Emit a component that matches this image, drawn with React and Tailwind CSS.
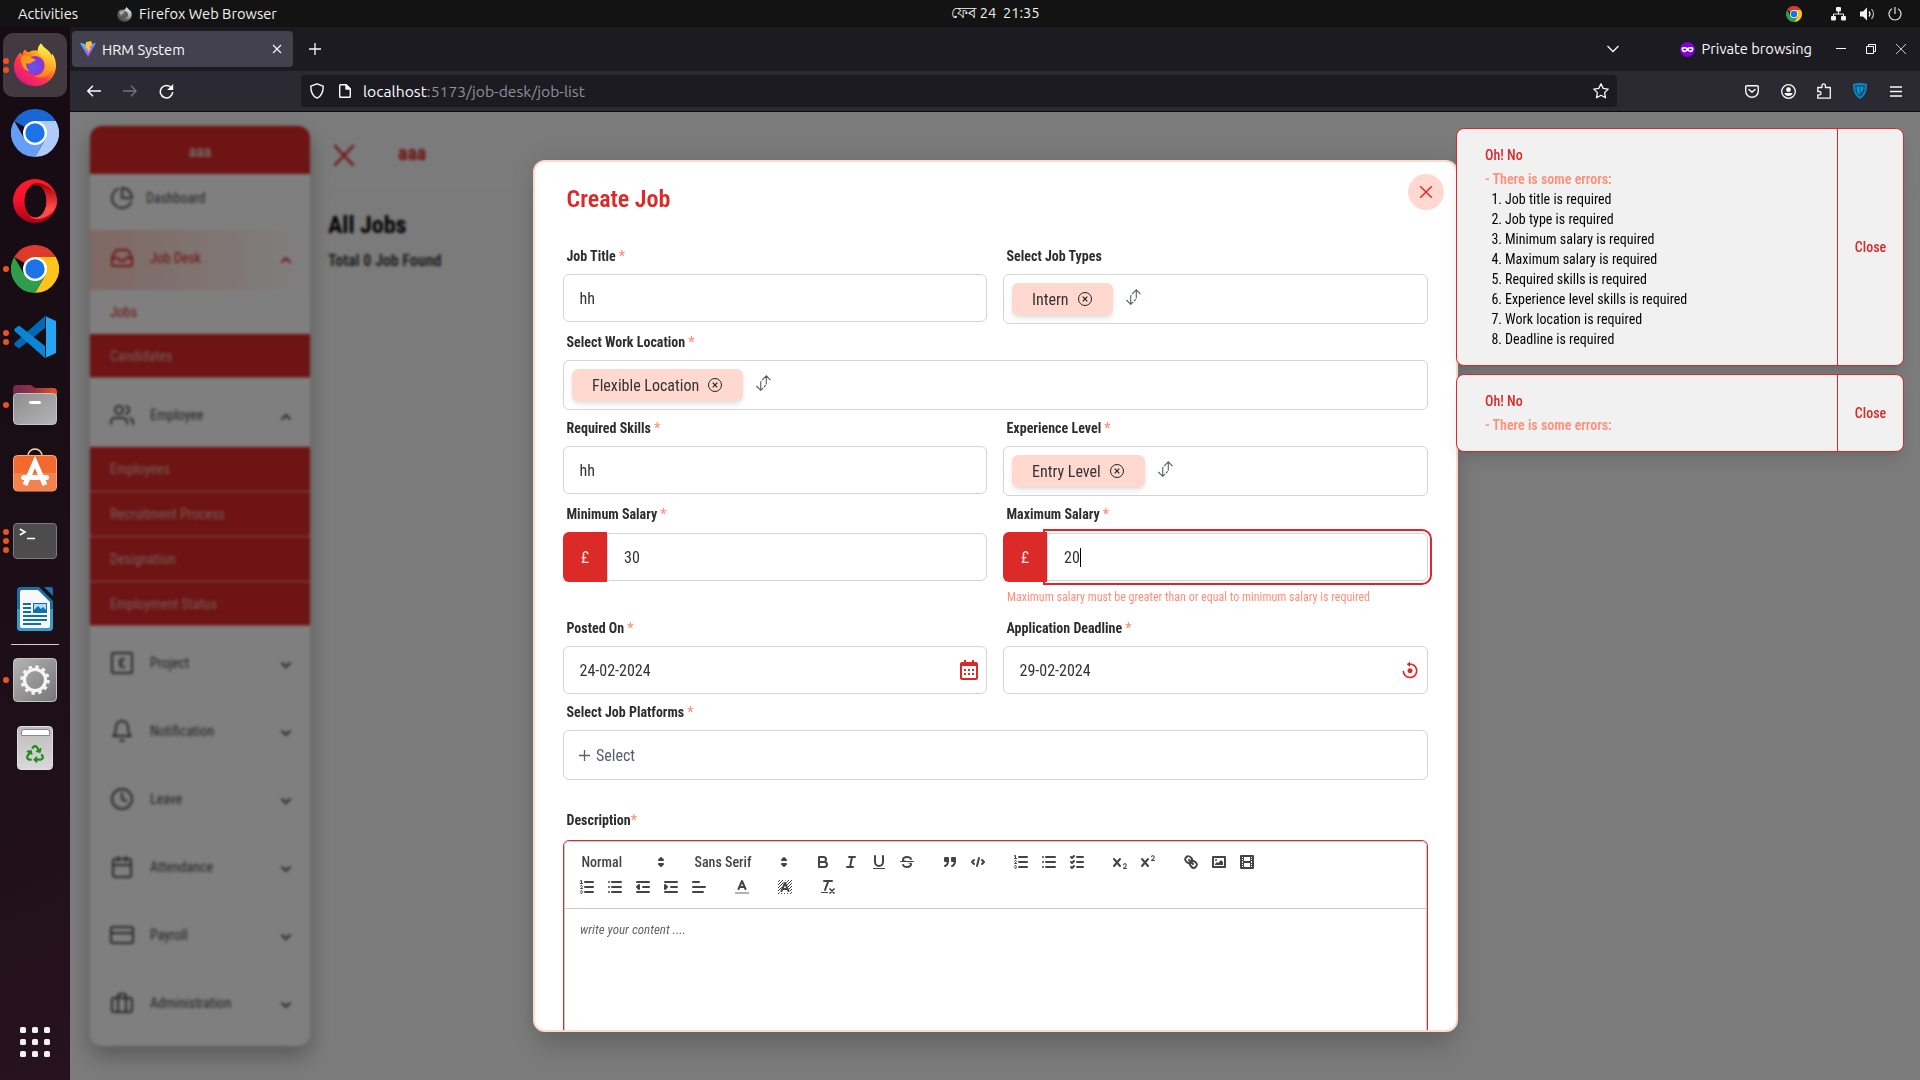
import React from 'react';
import { FiPieChart, FiInbox, FiUsers, FiBell, FiClock, FiCalendar, FiCreditCard, FiBriefcase, FiChevronDown, FiChevronUp } from 'react-icons/fi';
import { BiCalendar, BiReset } from 'react-icons/bi';
import { FaRecycle } from 'react-icons/fa';

/* ---------- dock icons ---------- */

function FirefoxIcon({ size = 44, gray = false }) {
  const id = gray ? 'g' : 'c';
  return (
    <svg width={size} height={size} viewBox="0 0 44 44" className={gray ? 'grayscale' : ''}>
      <defs>
        <linearGradient id={`ffb${id}`} x1="0.85" y1="0.1" x2="0.2" y2="0.95">
          <stop offset="0.05" stopColor="#fff44f" />
          <stop offset="0.35" stopColor="#ff980e" />
          <stop offset="0.62" stopColor="#ff3647" />
          <stop offset="1" stopColor="#e31587" />
        </linearGradient>
        <linearGradient id={`ffy${id}`} x1="0.6" y1="0" x2="0.5" y2="1">
          <stop offset="0" stopColor="#fff44f" />
          <stop offset="0.5" stopColor="#ffbd2e" />
          <stop offset="1" stopColor="#ff7a1f" />
        </linearGradient>
        <radialGradient id={`ffp${id}`} cx="0.4" cy="0.55" r="0.6">
          <stop offset="0" stopColor="#5b5ce8" />
          <stop offset="0.6" stopColor="#7a3fe0" />
          <stop offset="1" stopColor="#9a2fd0" />
        </radialGradient>
      </defs>
      <path d="M28 .5c-2.500 2.200-3.500 5.300-3.500 7.500-3-.8-6.500-.3-9 1.200-1.500-.3-2.500-1-3.500-2.700-1.500 1.500-2.300 3-2.300 5-.9-.2-1.800-1-2.200-2C4.500 12 1 17 1 23.500 1 34.500 10.500 43 22 43s21-8.500 21-20.500c0-4.500-1.500-9-4-12l-.5 2.500C37 7 31 6 28 .5Z" fill={`url(#ffb${id})`} />
      <path d="M28 .5c-3.500 3.500-4 8.500-1.500 11.500 4 2.500 6.500 6 6 11-.5 5.500-5 10-11 10 6.500 4 15.500 0 18.500-7 2.500-6 1-12-1.500-13C37 7 31 6 28 .5Z" fill={`url(#ffy${id})`} />
      <circle cx="22" cy="22.500" r="9.500" fill={`url(#ffp${id})`} />
      <path d="M7.500 14c4-2 8.500-2 11 .8 1 .9 4 1 4 1.700 0 1.500-3.500 2.500-4.500 3.500-1 1-3.500.5-5 .5 0 3 1 6 4 8-5-.5-9-5-9.500-14.500Z" fill="#ff9a1f" />
    </svg>
  );
}

function ChromeIcon({ size = 48, top = '#dd3a2b', left = '#2f9d4b', right = '#fcc41c' }) {
  return (
    <svg width={size} height={size} viewBox="0 0 48 48">
      <path d="M24 24 3.200 12A24 24 0 0 1 44.800 12Z" fill={top} />
      <path d="M24 12H44.800A24 24 0 0 1 24 48L34.400 30Z" fill={right} />
      <path d="M3.200 12A24 24 0 0 0 24 48L34.400 30 13.600 30Z" fill={left} />
      <path d="M24 12h20.800L34 30Z" fill={right} />
      <circle cx="24" cy="24" r="12" fill="#fff" />
      <circle cx="24" cy="24" r="9.700" fill="#1a73e8" />
    </svg>
  );
}

function OperaIcon() {
  return (
    <svg width="44" height="44" viewBox="0 0 44 44">
      <defs>
        <linearGradient id="op1" x1="0" y1="0" x2="0" y2="1">
          <stop offset="0" stopColor="#ff1b2d" />
          <stop offset="0.5" stopColor="#f0142a" />
          <stop offset="1" stopColor="#a70014" />
        </linearGradient>
        <linearGradient id="op2" x1="0" y1="0" x2="0" y2="1">
          <stop offset="0" stopColor="#9c0000" />
          <stop offset="0.7" stopColor="#ff4b4b" />
        </linearGradient>
      </defs>
      <path fillRule="evenodd" d="M22 0a22 22 0 1 0 0 44 22 22 0 0 0 0-44Zm.5 5.500c6 0 11 7.400 11 16.500s-5 16.500-11 16.500-11-7.400-11-16.500 5-16.500 11-16.500Z" fill="url(#op1)" />
      <path d="M15 8.500C18 5 22 3.500 26 4.200 35 6 44 12 44 22s-9 16.500-18 18c-4 .6-8-1-11-4.500 2.200 2 5 3.200 8 3 6-.5 10.500-7.500 10.500-16.500S29 6 22.500 5.500c-3 0-5.500 1-7.500 3Z" fill="url(#op2)" />
    </svg>
  );
}

function CodeIcon() {
  return (
    <svg width="42" height="42" viewBox="0 0 42 42">
      <path d="M31 0v12L5 32.500 1 29.500q-1.500-1.500 0-3Z" fill="#0069b4" />
      <path d="M31 42V30L5 9.500 1 12.500q-1.500 1.500 0 3Z" fill="#0a86d4" />
      <path d="M31 0 42 5v32l-11 5q1-1 1-3V3q0-2-1-3Z" fill="#26a5f2" />
    </svg>
  );
}

function FilesIcon() {
  return (
    <svg width="46" height="42" viewBox="0 0 46 42">
      <defs>
        <linearGradient id="fl1"><stop offset="0.1" stopColor="#77294f" /><stop offset="0.5" stopColor="#97343f" /><stop offset="1" stopColor="#e95420" /></linearGradient>
        <linearGradient id="fl2" x1="0" y1="0" x2="1" y2="1"><stop offset="0" stopColor="#8e8e8e" /><stop offset="1" stopColor="#b4b4b4" /></linearGradient>
      </defs>
      <path d="M1 20V5q0-4 4-4h13q2 0 3 1.500T24 4h17q4 0 4 4v12Z" fill="url(#fl1)" />
      <rect x="1.500" y="9.500" width="43" height="31" rx="4" fill="url(#fl2)" stroke="#c4c4c4" />
      <rect x="17" y="17" width="12" height="3" rx="1.500" fill="#fff" />
    </svg>
  );
}

function SoftwareIcon() {
  return (
    <svg width="46" height="44" viewBox="0 0 46 44" className="mb-[7px]">
      <path d="M16 10V8a7 7 0 0 1 14 0v2" fill="none" stroke="#f7dcb0" strokeWidth="1.500" />
      <rect x="1.500" y="7.500" width="43" height="35.500" rx="4" fill="#f26a2e" stroke="#f8a883" />
      <path d="M2 25h42v14q0 3.500-3.500 3.500H5.500Q2 42.500 2 39Z" fill="#f4824c" />
      <path d="M13 37 23 14 33 37" fill="none" stroke="#fff" strokeWidth="5" />
      <rect x="9" y="27" width="28" height="5" rx="2.500" fill="#fff" />
    </svg>
  );
}

function TerminalIcon() {
  return (
    <div className="flex h-9 w-[44px] items-start rounded-[4px] border border-[#7c7c7c] bg-[#4c4c4c] px-[5px] text-white">
      <svg width="18" height="18" viewBox="0 0 18 18" fill="none" stroke="#fff" strokeWidth="1.600">
        <path d="M.8 5 6 8 .8 11M8 14.500h8" />
      </svg>
    </div>
  );
}

function WriterIcon() {
  return (
    <svg width="36" height="44" viewBox="0 0 36 44">
      <path d="M4 0h18l14 14v26q0 4-4 4H4q-4 0-4-4V4q0-4 4-4Z" fill="#1d6ea6" />
      <path d="M0 22h36v18q0 4-4 4H4q-4 0-4-4Z" fill="#3b9bcd" />
      <path d="M27 0h7q2 0 2 2v7Z" fill="#1d6ea6" />
      <path d="M5 3h16l12 12v24q0 2-2 2H5q-2 0-2-2V5q0-2 2-2Z" fill="#f8f8f8" />
      <path d="M6 17h8M6 21h8M6 25h8M6 29h24M6 33h24M6 37h18" stroke="#0f6fb2" strokeWidth="2" />
      <rect x="16.500" y="16.500" width="13" height="9" fill="#b5dbf3" stroke="#0f6fb2" />
      <path d="M17 25v-2l4-4 3 3 2-2 3 3v2Z" fill="#0f6fb2" />
    </svg>
  );
}

function SettingsIcon() {
  return (
    <svg width="44" height="44" viewBox="0 0 45 45">
      <defs><linearGradient id="st" x1="0" y1="0" x2="1" y2="1"><stop offset="0" stopColor="#b5b5b5" /><stop offset="1" stopColor="#757575" /></linearGradient></defs>
      <rect x=".5" y=".5" width="44" height="44" rx="4" fill="url(#st)" stroke="#c8c8c8" />
      <circle cx="22.500" cy="22.500" r="13.500" fill="none" stroke="#f4f4f4" strokeWidth="3" strokeDasharray="3.500 3.569" />
      <circle cx="22.500" cy="22.500" r="10.800" fill="none" stroke="#f4f4f4" strokeWidth="3.400" />
    </svg>
  );
}

function TrashIcon() {
  return (
    <div className="flex h-[44px] w-[36px] flex-col items-center rounded-[4px] border border-[#e0e0e0] bg-gradient-to-b from-[#bdbdbd] to-[#d8d8d8] pt-[2px]">
      <div className="h-[7px] w-[29px] rounded-t-[3px] border border-[#8a8a8a] bg-white" />
      <FaRecycle size={18} className="mt-[9px] text-[#258a1c]" />
    </div>
  );
}

function DockItem({ dots = 0, active = false, children }) {
  return (
    <div className="flex h-[68px] w-[70px] items-center">
      <div className="flex w-[3px] flex-col items-start gap-[3px]">
        {Array.from({ length: dots }, (_, i) => (
          <span key={i} className="z-10 ml-[3px] size-[6px] rounded-full bg-[#e95420]" />
        ))}
      </div>
      <div className={`flex size-16 items-center justify-center rounded-[10px] ${active ? 'bg-[#433940]' : ''}`}>{children}</div>
    </div>
  );
}

function Dock() {
  return (
    <aside className="flex w-[70px] flex-none flex-col bg-[linear-gradient(160deg,#160b12_0%,#1c0f17_60%,#27121f_100%)] pt-1">
      <DockItem dots={2} active><FirefoxIcon /></DockItem>
      <DockItem><ChromeIcon top="#1967d2" left="#669df6" right="#aecbfa" /></DockItem>
      <DockItem><OperaIcon /></DockItem>
      <DockItem dots={1}><ChromeIcon /></DockItem>
      <DockItem dots={2}><CodeIcon /></DockItem>
      <DockItem dots={1}><FilesIcon /></DockItem>
      <DockItem><SoftwareIcon /></DockItem>
      <DockItem dots={3}><TerminalIcon /></DockItem>
      <DockItem><WriterIcon /></DockItem>
      <div className="mx-[11px] my-[1px] h-px bg-[#d0cdcf]" />
      <DockItem dots={1}><SettingsIcon /></DockItem>
      <DockItem><TrashIcon /></DockItem>
      <div className="mx-auto mt-auto mb-[23px] grid grid-cols-3 gap-[6px]">
        {Array.from({ length: 9 }, (_, i) => <span key={i} className="size-[6px] rounded-[1.500px] bg-[#f2f2f2]" />)}
      </div>
    </aside>
  );
}

/* ---------- desktop top bar ---------- */

function TopBar() {
  return (
    <header className="grid h-[27px] flex-none grid-cols-3 items-center bg-[#131313] text-[14.667px] leading-none text-[#f2f2f2]">
      <div className="flex items-center pt-px pl-[18px]">
        <span>Activities</span>
        <span className="mr-[7px] ml-[39px]"><FirefoxIcon size={15} gray /></span>
        <span>Firefox Web Browser</span>
      </div>
      <div className="pl-[71px] text-center whitespace-pre">ফেব 24  21:35</div>
      <div className="flex items-center justify-end pr-[18px]">
        <ChromeIcon size={16} />
        <svg className="ml-[29px]" width="15" height="14" viewBox="0 0 15 14" fill="#f2f2f2">
          <rect x="5" y="0" width="5" height="4.500" rx="1" /><rect x="0" y="9" width="5" height="4.500" rx="1" /><rect x="10" y="9" width="5" height="4.500" rx="1" />
          <path d="M2.500 9V7h10v2M7.500 4v3" fill="none" stroke="#f2f2f2" />
        </svg>
        <svg className="ml-[14px]" width="15" height="14" viewBox="0 0 15 14" fill="#f2f2f2">
          <path d="M0 4.500h3L7 .5v13l-4-4H0Z" /><path d="M9 4.500q2 2.500 0 5" fill="none" stroke="#f2f2f2" strokeWidth="1.300" /><path d="M11.500 2q4 5 0 10" fill="none" stroke="#bbb" strokeWidth="1.200" />
        </svg>
        <svg className="ml-[13px]" width="14" height="14" viewBox="0 0 14 14" fill="none" stroke="#e6e6e6" strokeWidth="1.200">
          <path d="M7 0v7M4 1.800a6 6 0 1 0 6 0" />
        </svg>
      </div>
    </header>
  );
}

/* ---------- browser chrome ---------- */

function TabStrip() {
  return (
    <div className="flex h-11 items-center bg-[#1c1b22] pl-[2px] text-[14.667px] text-[#fbfbfe]">
      <div className="flex h-9 w-[221px] items-center rounded-[4px] bg-[#42414d] pl-2 pr-[11px]">
        <svg width="16" height="16" viewBox="0 0 16 16">
          <defs><linearGradient id="vt" x1="0" y1="0" x2="0.7" y2="1"><stop offset="0" stopColor="#41d1ff" /><stop offset="1" stopColor="#bd34fe" /></linearGradient></defs>
          <path d="M0 2 8 16 16 2 8 3.400Z" fill="url(#vt)" />
          <path d="M11.500 0 6 1.100 5.600 7.400l1.700-.3-.5 2.400 1.500-.4-.7 3.500L11 7l-1.500.3.6-2 1.800-.4Z" fill="#ffc62a" />
        </svg>
        <span className="mt-px ml-[6px]">HRM System</span>
        <svg className="ml-auto" width="10" height="10" viewBox="0 0 10 10" stroke="#fbfbfe" strokeWidth="1.100"><path d="m1 1 8 8M9 1 1 9" /></svg>
      </div>
      <svg className="ml-[16px]" width="12" height="12" viewBox="0 0 12 12" stroke="#fbfbfe" strokeWidth="1.300"><path d="M6 0v12M0 6h12" /></svg>
      <svg className="ml-auto" width="12" height="8" viewBox="0 0 12 8" fill="none" stroke="#fbfbfe" strokeWidth="1.300"><path d="m.5 1 5.500 5.500L11.500 1" /></svg>
      <svg className="ml-[61px]" width="15" height="15" viewBox="0 0 15 15">
        <circle cx="7.500" cy="7.500" r="7.500" fill="#8000d7" />
        <path d="M7.500 6C6 4.800 2 4.300 1.500 6.500 1.300 9 3 10.500 4.500 10.300c1.500-.2 2-1.300 3-1.300s1.500 1.100 3 1.300c1.500.2 3.200-1.300 3-3.800C13 4.300 9 4.800 7.500 6Z" fill="#fff" />
        <ellipse cx="4.700" cy="7.500" rx="1.600" ry="1" fill="#8000d7" /><ellipse cx="10.300" cy="7.500" rx="1.600" ry="1" fill="#8000d7" />
      </svg>
      <span className="ml-[7px]">Private browsing</span>
      <svg className="ml-[24px]" width="10" height="10" viewBox="0 0 10 10"><path d="M0 4.500h10" stroke="#fff" /></svg>
      <svg className="ml-[20px]" width="10" height="10" viewBox="0 0 10 10" fill="none" stroke="#fff"><path d="M.5 2.500h7v7h-7ZM2.500 2V.5h7v7H8" /></svg>
      <svg className="ml-[20px] mr-[14px]" width="10" height="10" viewBox="0 0 10 10" stroke="#ddd" strokeWidth="0.900"><path d="m0 0 10 10M10 0 0 10" /></svg>
    </div>
  );
}

function NavBar() {
  return (
    <div className="flex h-[41px] items-center border-b border-[#0c0c0d] bg-[#2b2a33] text-[15.7px] text-[#fbfbfe]">
      <svg className="ml-[17px]" width="14" height="12" viewBox="0 0 14 12" fill="none" stroke="#fbfbfe" strokeWidth="1.400"><path d="M14 6H1M6 .8.8 6 6 11.200" /></svg>
      <svg className="ml-[22px]" width="14" height="12" viewBox="0 0 14 12" fill="none" stroke="#77767e" strokeWidth="1.300"><path d="M0 6h13M8 .8 13.200 6 8 11.200" /></svg>
      <svg className="ml-[22px]" width="15" height="15" viewBox="0 0 15 15" fill="none" stroke="#fbfbfe" strokeWidth="1.500"><path d="M12.500 4A6.200 6.200 0 1 0 13.700 8" /><path d="M14.200 0v6h-6Z" fill="#fbfbfe" stroke="none" /></svg>
      <div className="ml-[127px] flex h-8 w-[1316px] items-center rounded-[4px] bg-[#1c1b22]">
        <svg className="ml-[9px]" width="14" height="16" viewBox="0 0 14 16" fill="none" stroke="#fbfbfe" strokeWidth="1.400"><path d="M7 .8 13.200 3.200c0 6-1.700 10-6.200 12C2.500 13.200.8 9.200.8 3.200Z" strokeLinejoin="round" /></svg>
        <svg className="ml-[15px]" width="12" height="14" viewBox="0 0 12 14" fill="none" stroke="#fbfbfe" strokeWidth="1.400" strokeLinejoin="round"><path d="M1.500.7H7L11.300 5v7.500q0 .8-.8.8h-9q-.8 0-.8-.8v-11q0-.8.8-.8Z" /><path d="M7 .7V5h4.300Z" fill="#fbfbfe" /></svg>
        <span className="mt-[2px] ml-[12px]">localhost<span className="text-[#8f8f9a]">:5173/job-desk/job-list</span></span>
        <svg className="ml-auto mr-[8px]" width="16" height="16" viewBox="0 0 16 16" fill="none" stroke="#fbfbfe" strokeWidth="1.300" strokeLinejoin="round"><path d="m8 .8 2.200 4.600 5 .7-3.600 3.500.9 5.200L8 12.300l-4.500 2.500.9-5.200L.8 6.100l5-.7Z" /></svg>
      </div>
      <svg className="ml-[128px]" width="14" height="13" viewBox="0 0 14 13" fill="none" stroke="#fbfbfe" strokeWidth="1.400" strokeLinejoin="round"><path d="M2 .7h10q1.300 0 1.300 1.300v4A6.300 6.300 0 0 1 .7 6V2Q.7.700 2 .7Z" /><path d="m4 4.500 3 2.800 3-2.800" strokeLinecap="round" /></svg>
      <svg className="ml-[22px]" width="15" height="15" viewBox="0 0 15 15"><circle cx="7.500" cy="7.500" r="6.800" fill="none" stroke="#fbfbfe" strokeWidth="1.300" /><circle cx="7.500" cy="5.700" r="2.400" fill="#fbfbfe" /><path d="M3.300 9h8.400q-1 3-4.200 3T3.300 9Z" fill="#fbfbfe" /></svg>
      <svg className="ml-[21px]" width="14" height="16" viewBox="0 0 14 16" fill="none" stroke="#fbfbfe" strokeWidth="1.300" strokeLinejoin="round"><path d="M5 4.500V2.800q0-2 1.700-2t1.700 2v1.700h4.900v10.700H.8v-3.400h1.500q1.800 0 1.800-1.600T2.300 8.500H.8v-4Z" /></svg>
      <svg className="ml-[22px]" width="14" height="16" viewBox="0 0 14 16"><path d="M0 1q7-1.800 14 0 .3 11-7 15Q-.3 12 0 1Z" fill="#0d86c6" /><path d="M2 2.500q5-1.200 10 0 .2 8-5 11.500Q1.800 10.500 2 2.500Z" fill="#12506f" /><path d="M3.600 3.800Q5 3.500 6.500 3.500v8.700Q3.500 9 3.600 3.800Zm3.900-.3q1.500 0 2.900.3 0 3.500-2.900 7Z" fill="#0d9be0" /></svg>
      <svg className="ml-[23px]" width="12" height="11" viewBox="0 0 12 11" stroke="#fbfbfe" strokeWidth="1.300"><path d="M0 1h12M0 5.500h12M0 10h12" /></svg>
    </div>
  );
}

/* ---------- page behind the dialog ---------- */

function ProjectIcon({ size }) {
  return (
    <svg width={size} height={size} viewBox="0 0 24 24" fill="none" stroke="currentColor" strokeWidth="2">
      <rect x="2" y="2" width="20" height="20" rx="1.500" /><path d="M15 8h-2.500a2.500 2.500 0 0 0-2.500 2.500v3a2.500 2.500 0 0 0 2.500 2.500H15M9 12h4" />
    </svg>
  );
}

function NavRow({ icon: Icon, label, chevron = 'down', className = 'h-[68px]' }) {
  return (
    <div className={`flex items-center pl-5 pr-4 ${className}`}>
      <Icon size={24} />
      <span className={chevron ? 'ml-4' : 'ml-3'}>{label}</span>
      {chevron === 'down' && <FiChevronDown size={16} strokeWidth={3} className="mt-1 ml-auto" />}
      {chevron === 'up' && <FiChevronUp size={16} strokeWidth={3} className="mt-1 ml-auto" />}
    </div>
  );
}

function SubRow({ children, className = 'h-[45px]' }) {
  return <div className={`flex items-center border-b border-[#f3a9a0] bg-[#dc2828] pl-5 text-[#e9b5b0] ${className}`}>{children}</div>;
}

function Page() {
  return (
    <div className="flex h-full bg-[#f7f7f7] pl-5 pt-[14px] text-base">
      <nav className="h-[920px] w-[220px] overflow-hidden rounded-xl bg-white text-sm text-[#4f4f4f] shadow-[0_10px_22px_rgba(0,0,0,0.28)]">
        <div className="flex h-12 items-center justify-center bg-[#dc2828] pt-1 text-base font-bold text-[#eec4c0]">aaa</div>
        <NavRow icon={FiPieChart} label="Dashboard" chevron="" className="h-12" />
        <NavRow icon={FiInbox} label="Job Desk" chevron="up" className="mt-2 h-[60px] bg-gradient-to-r from-[#ffd0c6] to-white pb-1 text-[#dc2828]" />
        <div className="flex h-11 items-center pl-5 text-[#dc2828]">Jobs</div>
        <SubRow className="h-[44px]">Candidates</SubRow>
        <NavRow icon={FiUsers} label="Employee" chevron="up" className="h-[69px] pt-[5px]" />
        <SubRow>Employees</SubRow>
        <SubRow>Recruitment Process</SubRow>
        <SubRow>Designation</SubRow>
        <SubRow className="h-[44px] pt-px">Employment Status</SubRow>
        <NavRow icon={ProjectIcon} label="Project" className="mt-[3px] h-[68px]" />
        <NavRow icon={FiBell} label="Notification" />
        <NavRow icon={FiClock} label="Leave" />
        <NavRow icon={FiCalendar} label="Attendance" />
        <NavRow icon={FiCreditCard} label="Payroll" />
        <NavRow icon={FiBriefcase} label="Administration" />
      </nav>
      <main className="flex-1 pl-[14px]">
        <div className="flex h-[66px] items-center border-b border-[#efefef] pl-[10px] pb-2 text-[#dc2828]">
          <svg width="20" height="22" viewBox="0 0 20 22" stroke="#dc2828" strokeWidth="2.500"><path d="M0 1 20 22M20 1 0 22" /></svg>
          <span className="ml-[44px] pb-1 text-xl font-bold">aaa</span>
        </div>
        <h1 className="mt-[17px] pl-1 text-2xl font-bold text-black">All Jobs</h1>
        <p className="mt-2 pl-1 text-base font-semibold text-[#333]">Total 0 Job Found</p>
      </main>
    </div>
  );
}

/* ---------- form ---------- */

function Field({ label, required = true, tight = false, children, className = '' }) {
  return (
    <div className={className}>
      <div className="flex h-9 items-center pl-[3.5px] text-sm font-bold text-[#2d2d2d]">
        {label}
        {required && <span className={`font-medium text-[#ff8f78] ${tight ? '' : 'ml-[3px]'}`}>*</span>}
      </div>
      {children}
    </div>
  );
}

function TextBox({ children, icon }) {
  return (
    <div className="flex h-12 items-center justify-between rounded-[6px] border border-[#d4d4d4] pl-[15.5px] pr-[5px] text-base text-[#333]">
      <span className="pt-px">{children}</span>
      {icon}
    </div>
  );
}

function ChipBox({ children }) {
  return (
    <div className="flex h-[50px] items-center rounded-[6px] border border-[#d4d4d4] pl-2 text-base text-[#333]">
      <div className="flex h-8 items-center rounded-[6px] bg-[#ffd9d0] pl-5 pr-[21px] shadow-md">
        <span className="pt-[2px]">{children}</span>
        <svg className="ml-[9px]" width="14" height="14" viewBox="0 0 14 14" fill="none" stroke="#222"><circle cx="7" cy="7" r="6.500" /><path d="m4.700 4.700 4.600 4.600M9.300 4.700 4.700 9.300" strokeWidth="1.200" /></svg>
      </div>
      <svg className="mb-1 ml-[13px]" width="15" height="16" viewBox="0 0 15 16" fill="none" stroke="#555f6b" strokeWidth="1.100">
        <path d="M10.300 9.500V1M6 5.200 10.300.9l4.200 4.200" />
        <path d="M4.700 7v8M.4 11l4.300 4.300 2.500-2.500M8 12l1.700-1.700M5.300 6 4.500 7" />
      </svg>
    </div>
  );
}

function SalaryBox({ value, focused }) {
  return (
    <div className="flex h-[50px] items-center">
      <span className="z-10 flex h-[50px] w-11 flex-none items-center justify-center rounded-l-[6px] bg-[#dc2a29] pt-[2px] text-base text-[#ffe5df]">£</span>
      <div className={`flex h-12 flex-1 items-center rounded-r-[6px] border border-[#d4d4d4] pl-4 text-base text-[#333] ${focused ? 'outline-2 outline-offset-2 outline-[#dc2828]' : ''}`}>
        <span className="pt-px">{value}</span>
        {focused && <span className="h-[19px] w-px bg-black" />}
      </div>
    </div>
  );
}

/* ---------- editor toolbar ---------- */

const S = { fill: 'none', stroke: '#444', strokeWidth: 2, strokeLinecap: 'round', strokeLinejoin: 'round' };
const F = { fill: '#444' };
const TWO = 'M15.500 15H13.861a3.858 3.858 0 0 0 1.914-2.975 1.800 1.800 0 0 0-1.600-1.751A1.921 1.921 0 0 0 12.021 11.700a.5.5 0 1 0 .957.291a.914.914 0 0 1 1.053-.725.810.810 0 0 1 .744.762c0 1.076-1.170 1.870-1.940 2.431A1.456 1.456 0 0 0 12 15.500a.5.5 0 0 0 .5.5h3a.5.5 0 0 0 0-1Z';

const ORDERED = (
  <>
    <path {...S} d="M7 4h8M7 9h8M7 14h8" />
    <path d="M2.500 5.500h2M2.300 2.900l1.200-.5v3" {...S} strokeWidth="1" />
    <path {...S} strokeWidth="1" d="M4.500 10.500h-2c0-.234 1.850-1.076 1.850-2.234A.959.959 0 0 0 2.500 8.156" />
    <path {...S} strokeWidth="1" d="M2.500 14.846a.959.959 0 0 0 1.850-.109A.7.700 0 0 0 3.750 14a.688.688 0 0 0 .6-.736.959.959 0 0 0-1.850-.109" />
  </>
);
const BULLET = <path {...S} d="M6 4h9M6 9h9M6 14h9M3 4h0M3 9h0M3 14h0" />;

const GLYPHS = {
  bold: <path {...S} d="M5 4H9.500a2.500 2.500 0 0 1 0 5H5ZM5 9h5.500a2.500 2.500 0 0 1 0 5H5Z" />,
  italic: <path {...S} d="M7 4h6M5 14h6M8 14 10 4" />,
  underline: <><path {...S} d="M5 3v6a4 4 0 0 0 8 0V3" /><rect {...F} x="3" y="15" width="12" height="1" /></>,
  strike: (
    <>
      <path {...S} strokeWidth="1" d="M15.500 8.500h-13" />
      <path {...F} d="M9.007 8C6.542 7.791 6 7.519 6 6.500 6 5.792 7.283 5 9 5c1.571 0 2.765.679 2.969 1.309a1 1 0 0 0 1.900-.617C13.356 4.106 11.354 3 9 3 6.200 3 4 4.538 4 6.500a3.200 3.200 0 0 0 .5 1.843Z" />
      <path {...F} d="M8.984 10C11.457 10.208 12 10.479 12 11.500c0 .708-1.283 1.500-3 1.500-1.571 0-2.765-.679-2.969-1.309a1 1 0 1 0-1.900.617C4.644 13.894 6.646 15 9 15c2.800 0 5-1.538 5-3.500a3.200 3.200 0 0 0-.5-1.843Z" />
    </>
  ),
  quote: <><path {...S} fill="#444" d="M4 5h3v3H4ZM11 5h3v3h-3Z" /><path {...S} d="M7 8c0 4.031-3 5-3 5M14 8c0 4.031-3 5-3 5" /></>,
  code: <path {...S} d="M5 7 3 9l2 2M13 7l2 2-2 2M10 5 8 13" />,
  ordered: ORDERED,
  bullet: BULLET,
  check: <path {...S} d="M9 4h6M9 9h6M9 14h6M3 4l1 1 2-2M3 9l1 1 2-2M3 14l1 1 2-2" />,
  sub: <><path {...S} d="M3 6l6 7M9 6l-6 7" /><path {...F} d={TWO} /></>,
  sup: <><path {...S} d="M3 6l6 7M9 6l-6 7" /><path {...F} d={TWO} transform="translate(0 -8)" /></>,
  link: (
    <>
      <path {...S} d="M7 7l4 4M8.900 4.577a3.476 3.476 0 0 1 .36 4.679A3.476 3.476 0 0 1 4.577 8.900C3.185 7.500 2.035 6.400 4.217 4.217S7.500 3.185 8.900 4.577Z" />
      <path {...S} d="M13.423 9.100a3.476 3.476 0 0 0-4.679-.360 3.476 3.476 0 0 0 .36 4.679c1.392 1.392 2.500 2.542 4.679.36S14.815 10.500 13.423 9.100Z" />
    </>
  ),
  image: <><rect {...S} x="3" y="4" width="12" height="10" /><circle {...F} cx="6" cy="7" r="1" /><path {...F} d="M5 12v-1l2-2 1 1 3-3 2 2v3Z" /></>,
  video: <><rect {...S} x="3" y="3" width="12" height="12" /><path {...F} d="M5 3h1v12H5zM12 3h1v12h-1zM5 8h8v2H5zM3 5h3v1H3zM3 7h3v1H3zM3 10h3v1H3zM3 12h3v1H3zM12 5h3v1h-3zM12 7h3v1h-3zM12 10h3v1h-3zM12 12h3v1h-3z" /></>,
  outdent: <><path {...S} d="M3 14h12M3 4h12M9 9h6" /><path {...S} fill="#444" d="M5 7v4L3 9Z" /></>,
  indent: <><path {...S} d="M3 14h12M3 4h12M9 9h6" /><path {...S} fill="#444" d="M3 7v4L5 9Z" /></>,
  align: <path {...S} d="M3 9h12M3 14h10M3 4h6" />,
  color: <><path {...S} strokeOpacity="0.4" strokeLinecap="square" d="M3 15h12" /><path {...S} d="M5.500 11 9 3l3.500 8M11.630 9H6.380" /></>,
  background: (
    <>
      <defs><pattern id="hatch" width="3" height="3" patternUnits="userSpaceOnUse"><path d="M0 3 3 0M-1 1 1-1M2 4 4 2" stroke="#444" strokeWidth="1" /></pattern></defs>
      <rect x="2" y="2" width="14" height="14" fill="url(#hatch)" />
      <path d="M5 14 9 4l4 10Z" fill="#fff" stroke="#fff" strokeWidth="2" />
      <path {...S} d="M5.500 13 9 5l3.500 8M11.630 11H6.380" />
    </>
  ),
  clean: <><path {...S} d="M5 3h8M6 12 9.350 3" /><path {...S} d="M11 11l4 4M15 11l-4 4" strokeWidth="1.700" /><rect {...F} x="2" y="14" width="7" height="1" /></>,
};

function Tools({ names }) {
  return (
    <div className="mr-[15px] flex">
      {names.map((n) => (
        <span key={n} className="flex h-6 w-7 items-center justify-center">
          <svg width="18" height="18" viewBox="0 0 18 18">{GLYPHS[n]}</svg>
        </span>
      ))}
    </div>
  );
}

function Picker({ children, className }) {
  return (
    <div className={`mr-[15px] flex h-6 items-center justify-between pl-[8.5px] pr-px text-sm font-medium text-[#444] ${className}`}>
      {children}
      <svg width="18" height="18" viewBox="0 0 18 18"><path {...S} fill="#444" d="m7 11 2 2 2-2ZM7 7l2-2 2 2Z" /></svg>
    </div>
  );
}

function Editor() {
  return (
    <div className="mt-[2px] h-[260px] rounded-t-[6px] border border-[#dc2828]">
      <div className="h-full rounded-t-[5px] border border-[#ccc]">
        <div className="border-b border-[#ccc] px-2 pt-2 pb-[9px]">
          <div className="flex">
            <Picker className="w-[98px]">Normal</Picker>
            <Picker className="w-[108px]">Sans Serif</Picker>
            <Tools names={['bold', 'italic', 'underline', 'strike']} />
            <Tools names={['quote', 'code']} />
            <Tools names={['ordered', 'bullet', 'check']} />
            <Tools names={['sub', 'sup']} />
            <Tools names={['link', 'image', 'video']} />
          </div>
          <div className="mt-px flex">
            <Tools names={['ordered', 'bullet', 'outdent', 'indent', 'align']} />
            <Tools names={['color']} />
            <Tools names={['background']} />
            <Tools names={['clean']} />
          </div>
        </div>
        <p className="px-[15px] pt-3 text-[13px] leading-[18px] text-[#666] italic">write your content ....</p>
      </div>
    </div>
  );
}

function Dialog() {
  return (
    <section className="absolute top-[48px] left-[463px] h-[872px] w-[925px] overflow-hidden rounded-xl border-2 border-[#ffd9d0] bg-white pr-[28px] pl-[28px] shadow-[0_20px_25px_-5px_rgba(0,0,0,0.15),0_0_24px_rgba(0,0,0,0.1)]">
      <div className="flex h-[76px] items-start justify-between">
        <h2 className="mt-[21px] pl-[3.5px] text-2xl font-semibold text-[#dc2828]">Create Job</h2>
        <button className="mt-3 -mr-4 flex size-9 items-center justify-center rounded-full bg-[#ffd9d0]">
          <svg width="12" height="12" viewBox="0 0 12 12" stroke="#dc2828" strokeWidth="1.500" strokeLinecap="round"><path d="m.7.7 10.600 10.600M11.300.7.7 11.300" /></svg>
        </button>
      </div>
      <div className="grid grid-cols-[424px_1fr] gap-x-4">
        <Field label="Job Title"><TextBox>hh</TextBox></Field>
        <Field label="Select Job Types" required={false}><ChipBox>Intern</ChipBox></Field>
        <Field label="Select Work Location" className="col-span-2"><ChipBox>Flexible Location</ChipBox></Field>
        <Field label="Required Skills"><TextBox>hh</TextBox></Field>
        <Field label="Experience Level"><ChipBox>Entry Level</ChipBox></Field>
        <Field label="Minimum Salary"><SalaryBox value="30" /></Field>
        <Field label="Maximum Salary">
          <SalaryBox value="20" focused />
          <p className="h-7 pt-[7px] pl-1 text-xs text-[#ff8f78]">Maximum salary must be greater than or equal to minimum salary is required</p>
        </Field>
        <Field label="Posted On"><TextBox icon={<BiCalendar size={24} className="text-[#dc2828]" />}>24-02-2024</TextBox></Field>
        <Field label="Application Deadline"><TextBox icon={<BiReset size={20} className="mr-[2px] text-[#dc2828]" />}>29-02-2024</TextBox></Field>
        <Field label="Select Job Platforms" className="col-span-2">
          <div className="flex h-[50px] items-center rounded-[6px] border border-[#d4d4d4] pl-[15px] text-base text-[#56606d]">
            <svg width="11" height="11" viewBox="0 0 11 11" stroke="#56606d" strokeWidth="1.300"><path d="M5.500 0v11M0 5.500h11" /></svg>
            <span className="ml-[6px] pt-[2px]">Select</span>
          </div>
        </Field>
        <Field label="Description" tight className="col-span-2 mt-[22px]"><Editor /></Field>
      </div>
    </section>
  );
}

/* ---------- toasts ---------- */

const ERRORS = ['Job title is required', 'Job type is required', 'Minimum salary is required', 'Maximum salary is required', 'Required skills is required', 'Experience level skills is required', 'Work location is required', 'Deadline is required'];

function Toast({ items, className }) {
  return (
    <div className={`flex w-[448px] rounded-lg border border-[#dc2828] bg-[#f1f1f1] text-sm shadow-lg ${className}`}>
      <div className="flex-1 pt-4 pl-7">
        <p className="font-medium text-[#dc2828]">Oh! No</p>
        <p className="mt-1 font-semibold text-[#ff8f78]">- There is some errors:</p>
        <ol className="text-black">
          {items.map((t, i) => (
            <li key={t} className="flex gap-[3px]"><span className="w-[17px] text-right">{i + 1}.</span>{t}</li>
          ))}
        </ol>
      </div>
      <button className="w-[66px] border-l border-[#dc2828] font-medium text-[#dc2828]">Close</button>
    </div>
  );
}

export default function App() {
  return (
    <div className="flex h-[1080px] w-[1920px] flex-col overflow-hidden bg-black font-['Ubuntu','Noto_Sans',sans-serif]">
      <TopBar />
      <div className="flex min-h-0 flex-1">
        <Dock />
        <div className="flex min-w-0 flex-1 flex-col">
          <TabStrip />
          <NavBar />
          <div className="relative min-h-0 flex-1 overflow-hidden font-['Roboto_Condensed','Roboto',sans-serif]">
            <Page />
            <div className="absolute inset-0 bg-black/50 backdrop-blur-[1.8px]" />
            <Dialog />
            <div className="absolute top-4 right-4 flex flex-col gap-2">
              <Toast items={ERRORS} className="h-[238px]" />
              <Toast items={[]} className="h-[78px]" />
            </div>
          </div>
        </div>
      </div>
    </div>
  );
}
